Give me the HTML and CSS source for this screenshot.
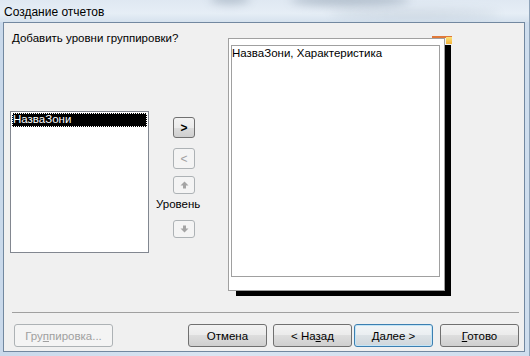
FILE: index.html
```html
<!DOCTYPE html>
<html lang="ru">

<head>
    <meta charset="UTF-8">
    <title>Создание отчетов</title>
    <link rel="stylesheet" href="styles.css">
</head>

<body>
    <div class="window">
        <div class="titlebar">
            <span class="blur blur-a"></span>
            <span class="blur blur-b"></span>
            <span class="blur blur-c"></span>
            <span class="title">Создание отчетов</span>
        </div>

        <div class="client">
            <div class="main">
                <div class="left">
                    <p class="question">Добавить уровни группировки?</p>
                    <div class="listbox">
                        <div class="item selected">НазваЗони</div>
                    </div>
                </div>

                <div class="movers">
                    <button class="tool">&gt;</button>
                    <button class="tool tool-gap" disabled>&lt;</button>
                    <button class="tool tool-small" disabled>
                        <svg width="9" height="8" viewBox="0 0 9 8"><path d="M4.5 0.5 L8.5 4.5 L6 4.5 L6 7.5 L3 7.5 L3 4.5 L0.5 4.5 Z" fill="#a4a4a4"/></svg>
                    </button>
                    <span class="level">Уровень</span>
                    <button class="tool tool-small tool-down" disabled>
                        <svg width="9" height="8" viewBox="0 0 9 8"><path d="M4.5 7.5 L8.5 3.5 L6 3.5 L6 0.5 L3 0.5 L3 3.5 L0.5 3.5 Z" fill="#a4a4a4"/></svg>
                    </button>
                </div>

                <div class="preview">
                    <div class="page">
                        <div class="frame">НазваЗони, Характеристика</div>
                    </div>
                    <span class="corner-line"></span>
                    <span class="corner-grip"></span>
                </div>
            </div>

            <div class="separator"></div>

            <div class="footer">
                <button class="btn btn-wide" disabled>Гру<u>п</u>пировка...</button>
                <button class="btn btn-cancel">Отмена</button>
                <button class="btn">&lt; На<u>з</u>ад</button>
                <button class="btn btn-default"><u>Д</u>алее &gt;</button>
                <button class="btn btn-finish"><u>Г</u>отово</button>
            </div>
        </div>
    </div>
</body>

</html>
```

FILE: styles.css
```css
body {
    margin: 0;
    width: 530px;
    height: 356px;
    overflow: hidden;
    font-family: "Liberation Sans", Arial, sans-serif;
    font-size: 11.5px;
    color: #000;
}

.window {
    width: 530px;
    height: 356px;
    box-sizing: border-box;
    display: flex;
    flex-direction: column;
    background: linear-gradient(to right, #c9d9eb, #d9e5f2 40%, #cfdeee);
    border-right: 1px solid #8ea3b9;
}

.titlebar {
    position: relative;
    height: 22px;
    flex: none;
    overflow: hidden;
    background: linear-gradient(to bottom, #dfe8f2, #e6eef6 60%, #d6e2ee);
}

.title {
    position: relative;
    display: block;
    padding: 5px 0 0 4px;
    line-height: 15px;
    font-size: 12px;
}

/* blurred glass behind the title bar */
.blur {
    position: absolute;
    border-radius: 50%;
    background: #5d7186;
    filter: blur(5px);
    opacity: 0.35;
}

.blur-a {
    left: 210px;
    top: -6px;
    width: 40px;
    height: 10px;
}

.blur-b {
    left: 290px;
    top: -6px;
    width: 120px;
    height: 12px;
}

.blur-c {
    left: 330px;
    top: 10px;
    width: 170px;
    height: 8px;
    opacity: 0.18;
}

.client {
    flex: 1;
    margin: 0 4px 4px 3px;
    border: 1px solid #7288a0;
    background-color: #f0f0f0;
    display: flex;
    flex-direction: column;
}

.main {
    display: flex;
    height: 289px;
    box-sizing: border-box;
    padding: 8px 0 0 6px;
}

.left {
    width: 139px;
}

.question {
    margin: 0;
    padding-left: 2px;
    line-height: 14px;
    white-space: nowrap;
}

.listbox {
    margin-top: 66px;
    width: 139px;
    height: 142px;
    box-sizing: border-box;
    border: 1px solid #828790;
    background-color: #fff;
    padding: 1px;
}

.item {
    line-height: 13px;
    height: 14px;
    padding-left: 1px;
}

.item.selected {
    background-color: #000;
    color: #fff;
    outline: 1px dotted #fff;
    outline-offset: -1px;
}

.movers {
    width: 50px;
    margin-left: 7px;
    padding-top: 86px;
    display: flex;
    flex-direction: column;
}

.tool {
    width: 22px;
    height: 21px;
    margin-left: 17px;
    padding: 0;
    border: 1px solid #707070;
    border-radius: 3px;
    background: linear-gradient(to bottom, #f2f2f2, #ebebeb 50%, #dddddd 50%, #cfcfcf);
    font-family: "Liberation Sans", Arial, sans-serif;
    font-size: 12px;
    font-weight: bold;
    color: #000;
    display: flex;
    align-items: center;
    justify-content: center;
}

.tool:disabled {
    border-color: #adb2b5;
    background: #f4f4f4;
    color: #a0a0a0;
    font-weight: normal;
}

.tool-gap {
    margin-top: 10px;
}

.tool-small {
    height: 18px;
    margin-top: 7px;
}

.tool-down {
    margin-top: 9px;
}

.level {
    margin-top: 3px;
    line-height: 14px;
    white-space: nowrap;
}

.preview {
    position: relative;
    margin: 7px 0 0 22px;
}

.page {
    width: 217px;
    height: 253px;
    box-sizing: border-box;
    border: 1px solid #a0a0a0;
    background-color: #fff;
    padding: 6px 0 0 2px;
    box-shadow: 7px 6px 0 -1px #000;
}

.frame {
    width: 209px;
    height: 232px;
    box-sizing: border-box;
    border: 1px solid #a0a0a0;
    line-height: 14px;
    white-space: nowrap;
}

.corner-line {
    position: absolute;
    left: 204px;
    top: -2px;
    width: 20px;
    height: 2px;
    background-color: #e0793a;
}

.corner-grip {
    position: absolute;
    left: 218px;
    top: -1px;
    width: 6px;
    height: 7px;
    background: linear-gradient(to bottom, #fbe27a, #f3b23a);
}

.separator {
    height: 1px;
    margin: 0 5px 0 8px;
    background-color: #a0a0a0;
}

.footer {
    display: flex;
    padding: 11px 0 0 10px;
}

.btn {
    width: 79px;
    height: 23px;
    padding: 0;
    border: 1px solid #707070;
    border-radius: 3px;
    background: linear-gradient(to bottom, #f2f2f2, #ebebeb 50%, #dddddd 50%, #cfcfcf);
    font-family: "Liberation Sans", Arial, sans-serif;
    font-size: 11.5px;
    color: #000;
}

.btn + .btn {
    margin-left: 2px;
}

.btn-wide {
    width: 99px;
    border-color: #adb2b5;
    background: #f4f4f4;
    color: #a0a0a0;
}

.btn-wide + .btn-cancel {
    margin-left: 75px;
}

.btn-cancel + .btn {
    margin-left: 6px;
}

.btn-default {
    border-color: #3c7fb1;
    box-shadow: inset 0 0 0 1px #c4e5f6;
    background: linear-gradient(to bottom, #f2f5f7, #eaeef1 50%, #dce2e6 50%, #cfd6db);
}

.btn-finish {
    margin-left: 7px !important;
}
```
